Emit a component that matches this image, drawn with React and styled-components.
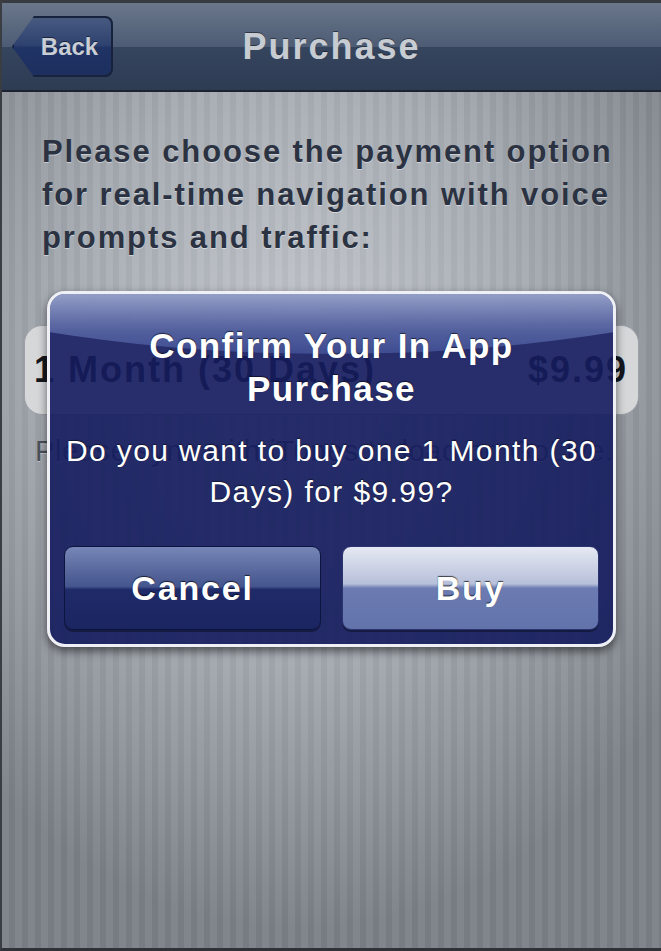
import React from "react";
import styled, { createGlobalStyle } from "styled-components";

const GlobalStyle = createGlobalStyle`
  html, body {
    margin: 0;
    padding: 0;
    width: 661px;
    height: 951px;
    overflow: hidden;
  }
  body {
    font-family: "Liberation Sans", Arial, Helvetica, sans-serif;
  }
`;

const Screen = styled.div`
  position: relative;
  width: 661px;
  height: 951px;
  box-sizing: border-box;
  border-left: 2px solid #3a3d42;
  border-bottom: 3px solid #2f3236;
  display: flex;
  flex-direction: column;
  background:
    repeating-linear-gradient(
      90deg,
      rgba(255, 255, 255, 0.05) 0px,
      rgba(255, 255, 255, 0.05) 7px,
      rgba(0, 0, 0, 0.025) 7px,
      rgba(0, 0, 0, 0.025) 13px
    ),
    radial-gradient(
      ellipse 70% 60% at 45% 38%,
      #c3c7cd 0%,
      #a6abb2 50%,
      #7a7f86 100%
    );
  overflow: hidden;
`;

const NavBar = styled.header`
  height: 87px;
  flex-shrink: 0;
  border-top: 3px solid #383c42;
  border-bottom: 2px solid #1c2230;
  background: linear-gradient(180deg, #6a778b 0%, #4d5c74 50%, #36455e 51%, #2d3b53 100%);
  display: flex;
  align-items: center;
  position: relative;
`;

const BackButton = styled.button`
  position: relative;
  margin-left: 10px;
  height: 61px;
  width: 101px;
  border: none;
  padding: 0 0 0 14px;
  background: linear-gradient(180deg, #495b80 0%, #2e4270 48%, #1f3364 52%, #1c2f5f 100%);
  clip-path: polygon(22px 0, 100% 0, 100% 100%, 22px 100%, 0 50%);
  border-radius: 0 8px 8px 0;
  color: #c9ced6;
  font-family: "Liberation Sans", Arial, sans-serif;
  font-weight: bold;
  font-size: 24px;
  text-shadow: 0 -1px 0 rgba(0, 0, 0, 0.5);
  box-shadow: inset 0 0 0 2px #18223c;
`;

const NavTitle = styled.h1`
  position: absolute;
  left: 0;
  right: 0;
  margin: 0;
  text-align: center;
  pointer-events: none;
  font-size: 36px;
  letter-spacing: 2px;
  font-weight: bold;
  color: #c7ccd3;
  text-shadow: 0 -1px 0 rgba(0, 0, 0, 0.45);
`;

const Content = styled.main`
  padding: 38px 22px 0 22px;
  display: flex;
  flex-direction: column;
`;

const Intro = styled.p`
  margin: 0 0 0 18px;
  font-size: 31px;
  letter-spacing: 1.9px;
  line-height: 43px;
  font-weight: bold;
  white-space: nowrap;
  color: #2b3242;
  text-shadow: 0 1px 0 rgba(255, 255, 255, 0.45);
`;

const OptionRow = styled.div`
  margin-top: 66px;
  height: 90px;
  border-radius: 18px;
  background: #d6d7d9;
  border: 1px solid #9da1a7;
  box-sizing: border-box;
  display: flex;
  align-items: center;
  justify-content: space-between;
  padding: 0 10px 0 9px;
  font-size: 36px;
  letter-spacing: 2px;
  font-weight: bold;
  color: #14171d;
  white-space: nowrap;
`;

const Note = styled.p`
  margin: 20px 0 0 11px;
  font-size: 29px;
  letter-spacing: 0.6px;
  white-space: nowrap;
  color: #4b5059;
  text-shadow: 0 1px 0 rgba(255, 255, 255, 0.4);
`;

const Overlay = styled.div`
  position: absolute;
  inset: 0;
  display: flex;
  justify-content: center;
  align-items: flex-start;
  padding-top: 291px;
`;

const Alert = styled.div`
  position: relative;
  width: 569px;
  box-sizing: border-box;
  border: 3px solid #eef0f6;
  border-radius: 18px;
  background: rgba(20, 28, 94, 0.9);
  box-shadow: 0 4px 10px rgba(0, 0, 0, 0.55);
  padding: 30px 8px 14px;
  display: flex;
  flex-direction: column;
  align-items: center;
  overflow: hidden;

  &::before {
    content: "";
    position: absolute;
    left: -70%;
    right: -70%;
    top: -420px;
    height: 480px;
    border-radius: 50%;
    background: linear-gradient(
      180deg,
      rgba(255, 255, 255, 0) 80%,
      rgba(190, 202, 236, 0.72) 87.5%,
      rgba(120, 138, 200, 0.55) 95%,
      rgba(85, 105, 182, 0.5) 100%
    );
    pointer-events: none;
  }
`;

const AlertTitle = styled.h2`
  position: relative;
  margin: 0;
  text-align: center;
  font-size: 35px;
  letter-spacing: 1.4px;
  line-height: 43px;
  font-weight: bold;
  color: #ffffff;
  text-shadow: 0 -1px 1px rgba(0, 0, 0, 0.6);
`;

const AlertMessage = styled.p`
  position: relative;
  margin: 20px 0 0;
  text-align: center;
  font-size: 30px;
  letter-spacing: 1.4px;
  line-height: 41px;
  white-space: nowrap;
  color: #ffffff;
  text-shadow: 0 -1px 1px rgba(0, 0, 0, 0.5);
`;

const ButtonRow = styled.div`
  margin-top: 34px;
  width: calc(100% - 12px);
  display: grid;
  grid-template-columns: 1fr 1fr;
  gap: 21px;
`;

const AlertButton = styled.button`
  height: 84px;
  border-radius: 9px;
  border: 1px solid ${({ $primary }) => ($primary ? "#2a3570" : "#0c1440")};
  background: ${({ $primary }) =>
    $primary
      ? "linear-gradient(180deg, #e6e9f3 0%, #b7c0da 45%, #6c7cb2 50%, #6272ab 100%)"
      : "linear-gradient(180deg, #7686b6 0%, #45558e 48%, #1f2a68 52%, #1b2562 100%)"};
  box-shadow: 0 2px 0 rgba(0, 0, 0, 0.35);
  color: #ffffff;
  font-family: "Liberation Sans", Arial, sans-serif;
  font-size: 34px;
  letter-spacing: 1.8px;
  font-weight: bold;
  text-shadow: 0 -1px 1px rgba(0, 0, 0, 0.7);
`;

export default function App() {
  return (
    <>
      <GlobalStyle />
      <Screen>
        <NavBar>
          <BackButton>Back</BackButton>
          <NavTitle>Purchase</NavTitle>
        </NavBar>
        <Content>
          <Intro>
            Please choose the payment option
            <br />
            for real-time navigation with voice
            <br />
            prompts and traffic:
          </Intro>
          <OptionRow>
            <span>1 Month (30 Days)</span>
            <span>$9.99</span>
          </OptionRow>
          <Note>Please sync with iTunes to load on GoLive.</Note>
        </Content>
        <Overlay>
          <Alert>
            <AlertTitle>
              Confirm Your In App
              <br />
              Purchase
            </AlertTitle>
            <AlertMessage>
              Do you want to buy one 1 Month (30
              <br />
              Days) for $9.99?
            </AlertMessage>
            <ButtonRow>
              <AlertButton>Cancel</AlertButton>
              <AlertButton $primary>Buy</AlertButton>
            </ButtonRow>
          </Alert>
        </Overlay>
      </Screen>
    </>
  );
}
